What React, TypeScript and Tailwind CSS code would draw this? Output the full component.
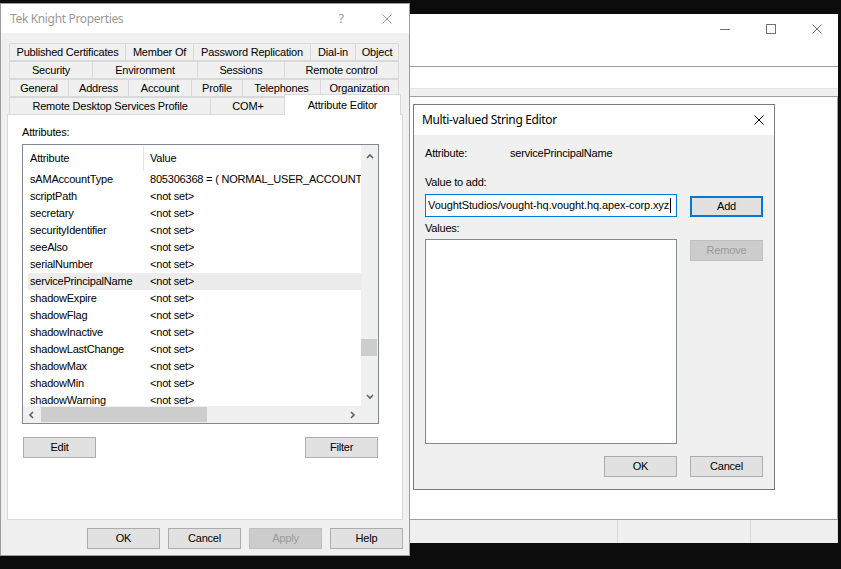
import type { ReactNode } from 'react';

const rows: [string, string][] = [
  ['sAMAccountType', '805306368 = ( NORMAL_USER_ACCOUNT )'],
  ['scriptPath', '<not set>'],
  ['secretary', '<not set>'],
  ['securityIdentifier', '<not set>'],
  ['seeAlso', '<not set>'],
  ['serialNumber', '<not set>'],
  ['servicePrincipalName', '<not set>'],
  ['shadowExpire', '<not set>'],
  ['shadowFlag', '<not set>'],
  ['shadowInactive', '<not set>'],
  ['shadowLastChange', '<not set>'],
  ['shadowMax', '<not set>'],
  ['shadowMin', '<not set>'],
  ['shadowWarning', '<not set>'],
];

const tabRows: [string, number][][] = [
  [['Published Certificates', 116], ['Member Of', 68], ['Password Replication', 117], ['Dial-in', 45], ['Object', 44]],
  [['Security', 83], ['Environment', 105], ['Sessions', 87], ['Remote control', 115]],
  [['General', 59], ['Address', 60], ['Account', 63], ['Profile', 51], ['Telephones', 78], ['Organization', 79]],
];

function Btn({ children, variant = 'normal', className = '' }: { children: ReactNode; variant?: 'normal' | 'disabled' | 'default'; className?: string }) {
  const look =
    variant === 'disabled'
      ? 'bg-[#cccccc] border border-[#bfbfbf] text-[#9a9a9a]'
      : variant === 'default'
        ? 'bg-[#e1e1e1] border-2 border-[#0078d7] text-black'
        : 'bg-[#e1e1e1] border border-[#adadad] text-black';
  return (
    <div className={`flex items-center justify-center w-[73px] h-[21px] shrink-0 ${look} ${className}`}>
      {children}
    </div>
  );
}

function Cross({ size = 10, color = '#999' }: { size?: number; color?: string }) {
  return (
    <svg width={size} height={size} viewBox="0 0 10 10">
      <path d="M0.5 0.5 L9.5 9.5 M9.5 0.5 L0.5 9.5" stroke={color} strokeWidth="1" />
    </svg>
  );
}

function Chevron({ dir }: { dir: 'up' | 'down' | 'left' | 'right' }) {
  const d = {
    up: 'M1 5 L4 2 L7 5',
    down: 'M1 2 L4 5 L7 2',
    left: 'M5 1 L2 4 L5 7',
    right: 'M2 1 L5 4 L2 7',
  }[dir];
  return (
    <svg width="8" height="8" viewBox="0 0 8 8">
      <path d={d} fill="none" stroke="#606060" strokeWidth="1.6" />
    </svg>
  );
}

function Tab({ label, w }: { label: string; w: number }) {
  return (
    <div
      className="h-[18px] shrink-0 flex items-center justify-center border-t border-l border-b border-[#d9d9d9] last:border-r bg-[#f0f0f0] whitespace-nowrap"
      style={{ width: w }}
    >
      {label}
    </div>
  );
}

function PropertiesDialog() {
  return (
    <div className="absolute left-0 top-[3px] w-[410px] h-[553px] border border-[#9c9c9c] bg-[#f0f0f0] flex flex-col">
      {/* title bar */}
      <div className="h-[29px] bg-white flex items-center pl-[9px] shrink-0">
        <span className="font-['Noto_Sans',sans-serif] text-[12px] tracking-[-0.35px] text-[#9a9a9a] flex-1">Tek Knight Properties</span>
        <span className="font-['Noto_Sans',sans-serif] text-[13px] text-[#9a9a9a] mr-[38px]">?</span>
        <div className="mr-[17px]">
          <Cross />
        </div>
      </div>

      <div className="flex flex-col px-[6px] pt-[10px]">
        {/* tabs */}
        <div className="ml-[2px] flex flex-col">
          {tabRows.map((row, i) => (
            <div key={i} className="flex h-[18px]">
              {row.map(([label, w]) => (
                <Tab key={label} label={label} w={w} />
              ))}
            </div>
          ))}
          <div className="flex h-[18px] items-start">
            <Tab label="Remote Desktop Services Profile" w={201} />
            <Tab label="COM+" w={75} />
            <div className="relative z-10 -mt-[3px] h-[21px] w-[117px] -ml-px bg-white border-t border-l border-r border-[#d9d9d9] flex items-start justify-center pt-[2px]">
              Attribute Editor
            </div>
          </div>
        </div>

        {/* tab panel */}
        <div className="-mt-px h-[406px] w-[396px] border border-[#d9d9d9] bg-white pl-[14px] pt-[11px] flex flex-col">
          <div className="leading-[13px] h-[13px]">Attributes:</div>
          <div className="mt-[5px] w-[357px] h-[280px] border border-[#828790] flex flex-col">
            <div className="flex h-[261px]">
              <div className="w-[338px] overflow-hidden flex flex-col whitespace-nowrap">
                <div className="h-[26px] flex items-center shrink-0">
                  <div className="w-[120px] shrink-0 pl-[7px]">Attribute</div>
                  <div className="w-px h-[25px] bg-[#e5e5e5] self-end shrink-0" />
                  <div className="pl-[6px]">Value</div>
                </div>
                {rows.map(([a, v]) => (
                  <div
                    key={a}
                    className={`ml-[5px] h-[17px] shrink-0 flex items-center pl-[2px] ${a === 'servicePrincipalName' ? 'bg-[#ececec]' : ''}`}
                  >
                    <div className="w-[120px] shrink-0 overflow-hidden">{a}</div>
                    <div className="shrink-0">{v}</div>
                  </div>
                ))}
              </div>
              {/* vertical scrollbar */}
              <div className="w-[17px] bg-[#f0f0f0] flex flex-col items-center">
                <div className="h-[17px] flex items-center justify-center mt-[3px]">
                  <Chevron dir="up" />
                </div>
                <div className="flex-1 w-full flex flex-col">
                  <div className="h-[174px]" />
                  <div className="h-[17px] w-[16px] bg-[#cdcdcd]" />
                </div>
                <div className="h-[17px] flex items-center justify-center mb-[1px]">
                  <Chevron dir="down" />
                </div>
              </div>
            </div>
            {/* horizontal scrollbar */}
            <div className="h-[17px] bg-[#f0f0f0] flex items-center">
              <div className="w-[18px] flex justify-center">
                <Chevron dir="left" />
              </div>
              <div className="w-[166px] h-[15px] bg-[#cdcdcd]" />
              <div className="flex-1" />
              <div className="w-[17px] flex justify-center mr-[17px]">
                <Chevron dir="right" />
              </div>
            </div>
          </div>
          <div className="mt-[13px] w-[357px] flex justify-between px-px">
            <Btn>Edit</Btn>
            <Btn>Filter</Btn>
          </div>
        </div>

        {/* footer buttons */}
        <div className="mt-[8px] flex justify-end gap-[8px]">
          <Btn>OK</Btn>
          <Btn>Cancel</Btn>
          <Btn variant="disabled">Apply</Btn>
          <Btn>Help</Btn>
        </div>
      </div>
    </div>
  );
}

function ConsoleWindow() {
  return (
    <div className="absolute left-[380px] top-[14px] w-[458px] h-[529px] bg-white flex flex-col">
      <div className="h-[53px] flex items-start justify-end pt-[10px] pr-[16px] gap-[36px] border-b border-[#a0a0a0]">
        <div className="w-[10px] h-[10px] flex items-center">
          <div className="w-[10px] h-px bg-[#707070]" />
        </div>
        <div className="w-[10px] h-[10px] border border-[#707070]" />
        <Cross color="#707070" />
      </div>
      <div className="h-[22px] border-b border-[#e3e3e3]" />
      <div className="h-[7px] bg-[#f0f0f0]" />
      <div className="flex-1 border-t border-r border-[#a0a0a0]" />
      <div className="h-[24px] bg-[#f0f0f0] border-t border-[#a0a0a0] flex">
        <div className="w-[238px] border-r border-[#d9d9d9]" />
        <div className="w-[133px] border-r border-[#d9d9d9]" />
        <div className="flex-1 border-r border-[#d9d9d9]" />
      </div>
    </div>
  );
}

function StringEditor() {
  return (
    <div className="absolute left-[413px] top-[104px] w-[362px] h-[386px] border border-[#7a7a7a] bg-[#f0f0f0] flex flex-col">
      <div className="h-[30px] bg-white flex items-center pl-[8px] pr-[10px] shrink-0">
        <span className="font-['Noto_Sans',sans-serif] text-[12px] tracking-[-0.35px] text-black flex-1">Multi-valued String Editor</span>
        <Cross color="#000" />
      </div>
      <div className="pl-[11px] pr-[11px] pt-[12px] flex flex-col">
        <div className="flex h-[13px] leading-[13px]">
          <span className="w-[85px]">Attribute:</span>
          <span>servicePrincipalName</span>
        </div>
        <div className="mt-[16px] h-[13px] leading-[13px]">Value to add:</div>
        <div className="mt-[5px] flex items-start">
          <div className="w-[252px] h-[23px] border border-[#0078d7] bg-white flex items-center pl-[2px] whitespace-nowrap overflow-hidden tracking-[-0.1px]">
            <span>VoughtStudios/vought-hq.vought.hq.apex-corp.xyz</span>
            <span className="w-px h-[15px] bg-black ml-px" />
          </div>
          <Btn variant="default" className="ml-[13px] mt-[2px]">Add</Btn>
        </div>
        <div className="mt-[5px] h-[13px] leading-[13px]">Values:</div>
        <div className="mt-[4px] flex items-start">
          <div className="w-[252px] h-[205px] border border-[#828790] bg-white" />
          <Btn variant="disabled" className="ml-[13px] mt-px">Remove</Btn>
        </div>
        <div className="mt-[12px] flex justify-end gap-[13px]">
          <Btn>OK</Btn>
          <Btn>Cancel</Btn>
        </div>
      </div>
    </div>
  );
}

export default function App() {
  return (
    <div className="relative w-[841px] h-[569px] bg-[#0c0c0c] overflow-hidden font-['Liberation_Sans',Arial,sans-serif] text-[11px] tracking-[-0.2px] text-black">
      <ConsoleWindow />
      <PropertiesDialog />
      <StringEditor />
    </div>
  );
}
